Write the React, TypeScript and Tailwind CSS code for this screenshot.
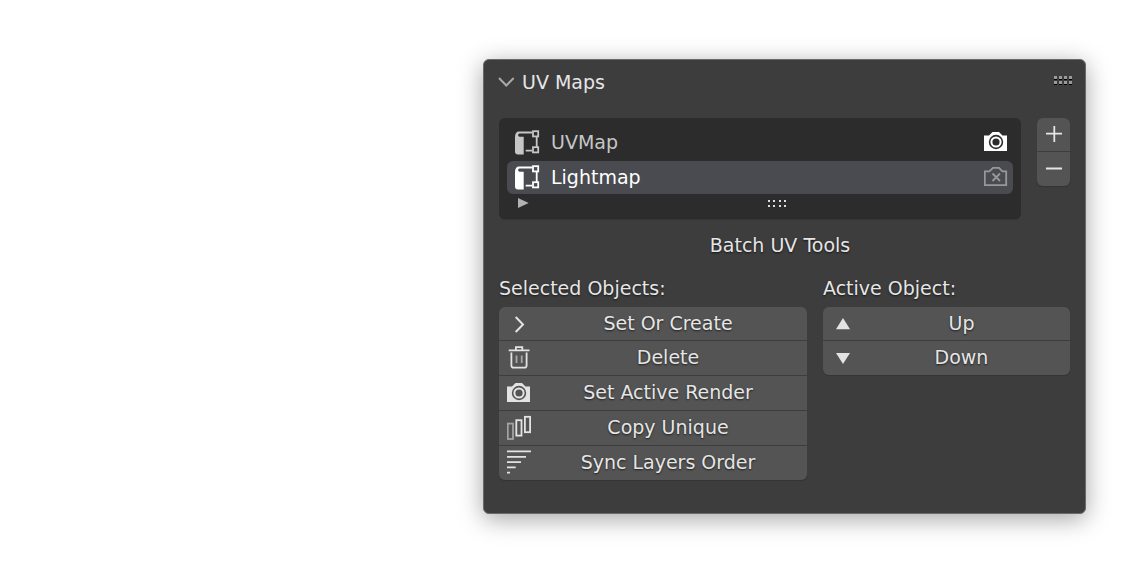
import { useState, type ReactNode } from "react";
import clsx from "clsx";

interface IconProps {
  children: ReactNode;
}

// Tool button icons share a 26px grid
function ToolIcon({ children }: IconProps) {
  return (
    <svg width="26" height="26" viewBox="0 4 26 26" fill="none" stroke="#e3e3e3" strokeWidth="1.8" className="ml-2 -mr-1 shrink-0">
      {children}
    </svg>
  );
}

function CameraShape({ color, lens }: { color: string; lens: string }) {
  return (
    <>
      <path d="M0 5.5 H5 L8.5 2 H15 L18.5 5.5 H23 V21 H0 Z" fill={color} stroke="none" />
      <circle cx="12" cy="12" r="7.2" fill={lens} stroke="none" />
      <circle cx="12" cy="12" r="4.6" fill="none" stroke={color} strokeWidth="2" />
    </>
  );
}

function UVIcon() {
  return (
    <svg width="25" height="26" viewBox="0 0 25 26" fill="none" stroke="currentColor" strokeWidth="1.8" className="shrink-0">
      <path d="M0 7 C0 3.5 1.5 1.5 4 1.5 H17 V3.6 H4.5 C2.8 3.6 2.6 6.6 4.5 6.8 H8.7 V24.5 H3 C1 24.5 0 23.5 0 21.5 Z" fill="currentColor" stroke="none" />
      <rect x="18" y="1.2" width="5.2" height="5.2" />
      <rect x="18" y="17.2" width="5.2" height="5.2" />
      <path d="M21.7 7 V17 M10.7 20.6 H17" />
    </svg>
  );
}

function RenderIcon({ active }: { active: boolean }) {
  return (
    <svg width="24" height="24" viewBox="0 1 24 24" fill="none">
      {active ? (
        <CameraShape color="#ffffff" lens="#2c2c2c" />
      ) : (
        <g stroke="#98989b" strokeWidth="1.8">
          <path d="M0.8 6.3 H5.3 L9 2.8 H15 L18.5 6.3 H22.2 V20.2 H0.8 Z" />
          <path d="M8.5 8.5 L16 16 M16 8.5 L8.5 16" />
        </g>
      )}
    </svg>
  );
}

const selectedTools = [
  { label: "Set Or Create", icon: <ToolIcon><path d="M8.7 10 L16 17.5 L8.7 25" strokeWidth="2" /></ToolIcon> },
  {
    label: "Delete",
    icon: (
      <ToolIcon>
        <path d="M1.7 9.3 H22.5 M8.9 9 V6.2 H15.3 V9" />
        <path d="M4.4 11.5 V24.5 Q4.4 26.7 6.6 26.7 H17.4 Q19.6 26.7 19.6 24.5 V11.5" />
        <path d="M9.5 14.5 V22 M14.7 14.5 V22" opacity="0.6" />
      </ToolIcon>
    ),
  },
  {
    label: "Set Active Render",
    icon: (
      <ToolIcon>
        <g transform="translate(0 5)"><CameraShape color="#e3e3e3" lens="#545454" /></g>
      </ToolIcon>
    ),
  },
  {
    label: "Copy Unique",
    icon: (
      <ToolIcon>
        <rect x="0.8" y="12.6" width="5.2" height="15.4" opacity="0.55" />
        <rect x="9.3" y="9.2" width="5.2" height="15.4" />
        <rect x="17.9" y="5.8" width="5.2" height="15.4" />
      </ToolIcon>
    ),
  },
  {
    label: "Sync Layers Order",
    icon: (
      <ToolIcon>
        <path d="M0 5.4 H24 M0 10.8 H19 M0 16.1 H14 M0 21.4 H8.7 M0 26.7 H3" />
      </ToolIcon>
    ),
  },
];

const activeTools = [
  { label: "Up", icon: <ToolIcon><path d="M12 11 L19 22.3 H5 Z" fill="#e3e3e3" stroke="none" /></ToolIcon> },
  { label: "Down", icon: <ToolIcon><path d="M12 23 L5 12 H19 Z" fill="#e3e3e3" stroke="none" /></ToolIcon> },
];

function ToolGroup({ title, tools }: { title: string; tools: { label: string; icon: ReactNode }[] }) {
  return (
    <section>
      <h3 className="h-[26px] mb-[6px] leading-[26px] whitespace-nowrap">{title}</h3>
      <div className="flex flex-col gap-px rounded-md overflow-hidden shadow-[0_1px_1px_#333]">
        {tools.map((tool) => (
          <button key={tool.label} type="button" className="flex items-center h-[34px] first:h-[33px] bg-[#545454] hover:bg-[#656565] [text-shadow:0_1px_2px_#000a]">
            {tool.icon}
            <span className="flex-1 pb-px text-center whitespace-nowrap">{tool.label}</span>
          </button>
        ))}
      </div>
    </section>
  );
}

export default function App() {
  const [selected, setSelected] = useState("Lightmap");
  const [render, setRender] = useState("UVMap");

  return (
    <main className="grid grid-cols-[483fr_603fr_60fr] pt-[59px] pb-[59px] min-h-screen bg-white">
      <div className="col-start-2 self-start pb-[33px] rounded-md bg-[#3d3d3d] text-[#e6e6e6] text-[19px] font-['DejaVu_Sans',sans-serif] border border-[#6a6a6a] shadow-[0_5px_24px_rgba(0,0,0,0.36)] [text-shadow:0_1px_2px_#000a]">
        <header className="flex items-center justify-between h-11 mb-[2px] pl-[14px] pr-[13px]">
          <button type="button" className="flex items-center gap-[7px]">
            <svg width="17" height="12" viewBox="0 0 17 12" fill="none" stroke="#a9a9a9" strokeWidth="2">
              <path d="M1 2 L8.3 9.5 L15.7 2" />
            </svg>
            <h2>UV Maps</h2>
          </button>
          <svg width="18" height="10" viewBox="0 0 18 10" className="mb-[3px]" shapeRendering="crispEdges">
            {[0, 5].map((y) => [0, 5, 10, 15].map((x) => (
              <g key={`${x}-${y}`}>
                <rect x={x} y={y} width="3" height="3" fill="#999" />
                <rect x={x} y={y + 3} width="3" height="1" fill="#000" />
              </g>
            )))}
          </svg>
        </header>

        <div className="flex items-start gap-4 px-[15px] pt-3">
          <div className="flex-1 px-2 pt-2 rounded-md bg-[#2c2c2c] shadow-[0_1px_0_#353535]">
            <ul className="flex flex-col gap-[2px]">
              {["UVMap", "Lightmap"].map((name) => (
                <li key={name} className={clsx("flex items-center h-[33px] pl-2 pr-[5px] rounded-md", name === selected ? "bg-[#4a4b50] text-white" : "text-[#c6c6c6]")}>
                  <button type="button" onClick={() => setSelected(name)} className="flex flex-1 items-center gap-[11px]">
                    <UVIcon />
                    {name}
                  </button>
                  <button type="button" aria-label={`Render ${name}`} onClick={() => setRender(name)}>
                    <RenderIcon active={name === render} />
                  </button>
                </li>
              ))}
            </ul>
            <div className="flex items-center h-[25px] -mr-2 pb-[7px]">
              <button type="button" aria-label="Filter" className="w-[26px] pl-[11px]">
                <svg width="11" height="10" viewBox="0 0 11 10" fill="#b2b2b2">
                  <path d="M0 0 L10.7 5 L0 10 Z" />
                </svg>
              </button>
              <svg width="18" height="7" viewBox="0 0 18 7" className="mx-auto" fill="#dddddd" shapeRendering="crispEdges">
                {[0, 5].map((y) => [0, 5, 11, 16].map((x) => <rect key={`${x}-${y}`} x={x} y={y} width="2" height="2" />))}
              </svg>
            </div>
          </div>
          <div className="flex flex-col gap-px w-[33px] rounded-md overflow-hidden shadow-[0_1px_1px_#333]">
            <button type="button" aria-label="Add UV map" className="flex items-center justify-center h-[33px] bg-[#545454] hover:bg-[#656565]">
              <svg width="18" height="17" viewBox="0 0 18 17" stroke="#e6e6e6" strokeWidth="1.8"><path d="M1 7.7 H17 M9.3 0 V16" /></svg>
            </button>
            <button type="button" aria-label="Remove UV map" className="flex items-center justify-center h-[34px] bg-[#545454] hover:bg-[#656565]">
              <svg width="18" height="17" viewBox="0 0 18 17" stroke="#e6e6e6" strokeWidth="1.8"><path d="M1 7.5 H17" /></svg>
            </button>
          </div>
        </div>

        <p className="mt-[13px] h-[26px] leading-[26px] pr-[9px] text-center">
          Batch UV Tools
        </p>

        <div className="grid grid-cols-[308fr_247fr] gap-4 items-start px-[15px] mt-[17px]">
          <ToolGroup title="Selected Objects:" tools={selectedTools} />
          <ToolGroup title="Active Object:" tools={activeTools} />
        </div>
      </div>
    </main>
  );
}
